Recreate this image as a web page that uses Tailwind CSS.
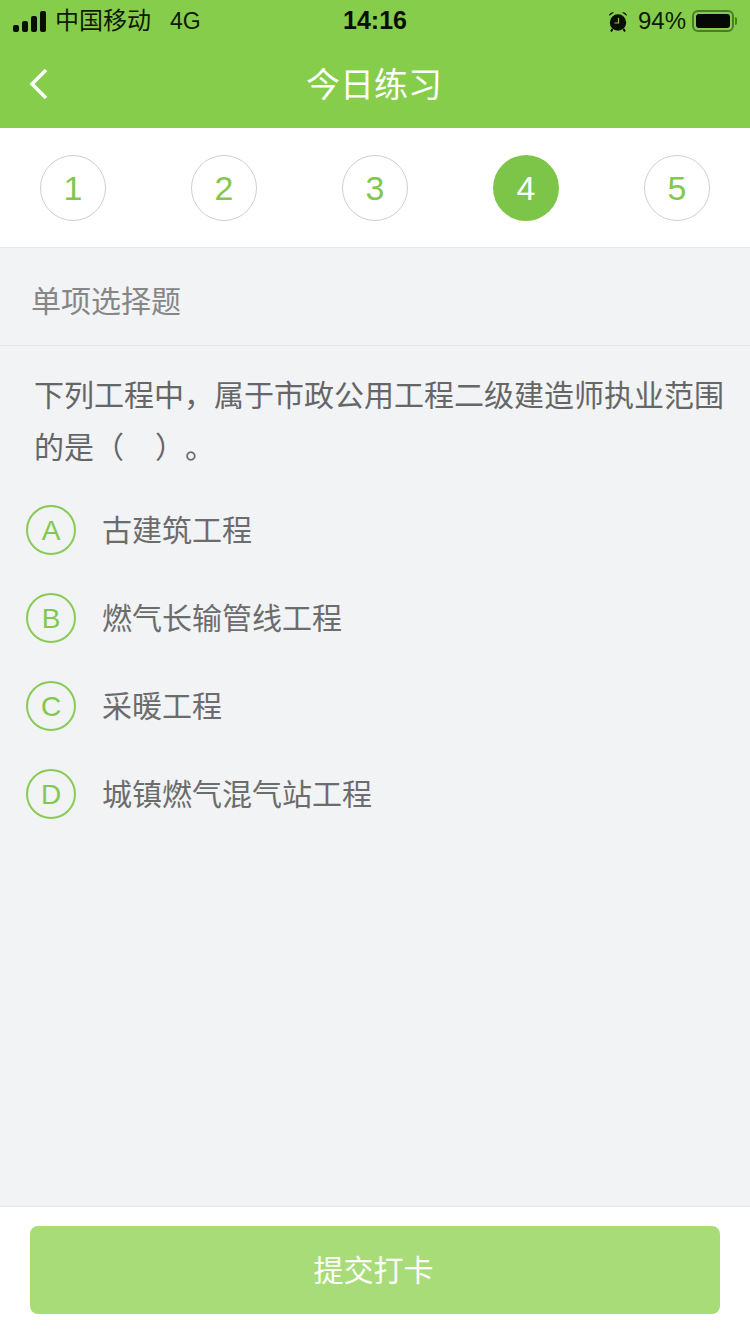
<!DOCTYPE html>
<html lang="zh">
<head>
  <meta charset="UTF-8" />
  <meta name="viewport" content="width=device-width, initial-scale=1.0"/>
  <title>今日练习</title>
  <script src="https://cdn.jsdelivr.net/npm/@tailwindcss/browser@4"></script>
</head>
<body class="w-[750px] h-[1334px] overflow-hidden flex flex-col bg-[#f1f3f5] font-['Liberation_Sans','Noto_Sans_CJK_SC',sans-serif]">

  <!-- Status bar -->
  <div class="h-10 bg-[#86cd4b] flex items-center justify-between pl-[13px] pr-[13px] pt-[2px] text-[#0d1a05] text-[24px] relative">
    <div class="flex items-center">
      <svg width="33" height="21" viewBox="0 0 33 21" fill="#0a0f05" class="mr-[9px]">
        <rect x="0" y="14" width="6" height="7" rx="2"/>
        <rect x="9" y="10" width="6" height="11" rx="2"/>
        <rect x="18" y="5" width="6" height="16" rx="2"/>
        <rect x="27" y="0" width="6" height="21" rx="2"/>
      </svg>
      <span>中国移动</span>
      <span class="ml-[19px] text-[23px]">4G</span>
    </div>
    <div class="absolute left-0 right-0 text-center font-bold text-[25px] text-[#0a0f05]">14:16</div>
    <div class="flex items-center">
      <svg width="20" height="21" viewBox="0 0 20 21" class="mr-[10px]">
        <circle cx="10" cy="11.5" r="8.2" fill="#0a0f05"/>
        <path d="M1 5 A4 4 0 0 1 6 1.5 Z M19 5 A4 4 0 0 0 14 1.5 Z" fill="#0a0f05"/>
        <path d="M4.5 18 L3 20.5 M15.5 18 L17 20.5" stroke="#0a0f05" stroke-width="2" fill="none"/>
        <path d="M10.5 7 V12 H6.5" stroke="#86cd4b" stroke-width="1.2" fill="none"/>
      </svg>
      <span>94%</span>
      <div class="ml-[6px] w-[42px] h-[22px] rounded-[6px] border-2 border-[#4a7d28] p-[2px]">
        <div class="w-full h-full rounded-[3px] bg-[#050805]"></div>
      </div>
      <div class="ml-[1px] w-[2px] h-2 rounded-r bg-[#4a7d28]"></div>
    </div>
  </div>

  <!-- Nav -->
  <div class="h-[88px] bg-[#86cd4b] flex items-center justify-center pt-[2px] pr-[2px] relative">
    <svg width="20" height="32" viewBox="0 0 20 32" class="absolute left-[29px] top-[28px]" fill="none" stroke="#ffffff" stroke-width="3.5">
      <path d="M17 2 L3 16 L17 30"/>
    </svg>
    <h1 class="text-[34px] text-white">今日练习</h1>
  </div>

  <!-- Question numbers -->
  <div class="h-[120px] bg-white border-b border-[#e6e6e6] flex items-center justify-between px-10 pt-px">
    <div class="w-[66px] h-[66px] rounded-full border border-[#cfcfcf] flex items-center justify-center text-[34px] text-[#82c850]">1</div>
    <div class="w-[66px] h-[66px] rounded-full border border-[#cfcfcf] flex items-center justify-center text-[34px] text-[#82c850]">2</div>
    <div class="w-[66px] h-[66px] rounded-full border border-[#cfcfcf] flex items-center justify-center text-[34px] text-[#82c850]">3</div>
    <div class="w-[66px] h-[66px] rounded-full bg-[#7cc548] flex items-center justify-center text-[34px] text-white">4</div>
    <div class="w-[66px] h-[66px] rounded-full border border-[#cfcfcf] flex items-center justify-center text-[34px] text-[#82c850]">5</div>
  </div>

  <!-- Question type -->
  <div class="h-[98px] border-b border-[#e6e8ea] flex items-center pl-[31px] pt-[10px] text-[30px] text-[#868686]">单项选择题</div>

  <!-- Question and options -->
  <div class="flex-1">
    <p class="pt-6 pl-[34px] pr-[20px] text-[30px] leading-[52px] text-[#666666]">下列工程中，属于市政公用工程二级建造师执业范围的是（&nbsp;&nbsp;&nbsp;<span class="inline-block w-[30px] ml-[6px]">）</span>。</p>
    <div class="mt-3 pl-[26px] flex flex-col">
      <div class="h-[88px] flex items-center text-[30px] text-[#6c6c6c]">
        <div class="w-[50px] h-[50px] pt-[2px] rounded-full border-2 border-[#88cc55] flex items-center justify-center text-[#82c850] text-[28px] mr-[26px]">A</div>古建筑工程
      </div>
      <div class="h-[88px] flex items-center text-[30px] text-[#6c6c6c]">
        <div class="w-[50px] h-[50px] pt-[2px] rounded-full border-2 border-[#88cc55] flex items-center justify-center text-[#82c850] text-[28px] mr-[26px]">B</div>燃气长输管线工程
      </div>
      <div class="h-[88px] flex items-center text-[30px] text-[#6c6c6c]">
        <div class="w-[50px] h-[50px] pt-[2px] rounded-full border-2 border-[#88cc55] flex items-center justify-center text-[#82c850] text-[28px] mr-[26px]">C</div>采暖工程
      </div>
      <div class="h-[88px] flex items-center text-[30px] text-[#6c6c6c]">
        <div class="w-[50px] h-[50px] pt-[2px] rounded-full border-2 border-[#88cc55] flex items-center justify-center text-[#82c850] text-[28px] mr-[26px]">D</div>城镇燃气混气站工程
      </div>
    </div>
  </div>

  <!-- Submit -->
  <div class="h-[128px] bg-white border-t border-[#e6e6e6] px-[30px] pt-[19px]">
    <button class="w-full h-[88px] rounded-lg bg-[#a8dc78] text-white text-[30px] pr-[3px]">提交打卡</button>
  </div>

</body>
</html>
